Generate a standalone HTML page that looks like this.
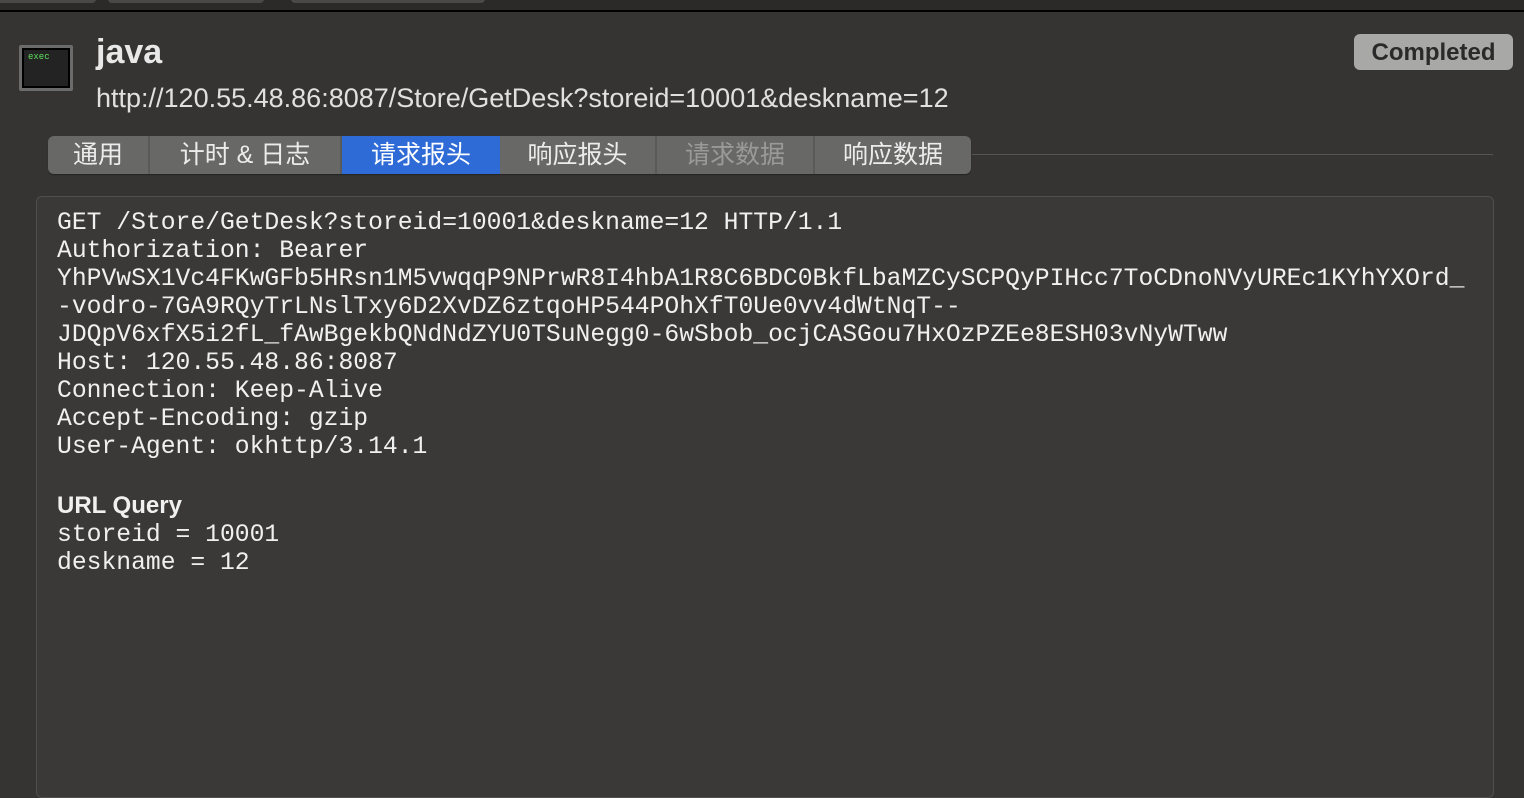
<!DOCTYPE html>
<html><head><meta charset="utf-8"><style>
body{margin:0;width:1524px;height:774px;background:#353433;overflow:hidden;position:relative;font-family:"Liberation Sans","Noto Sans CJK SC",sans-serif;color:#e6e6e6}
.top{position:absolute;left:0;top:0;width:1524px;height:10px;background:#2b2a29;border-bottom:2px solid #000}
.top div{position:absolute;top:-6px;height:9px;background:#4a4948;border-radius:4px}
.icon{position:absolute;left:19px;top:45px;width:54px;height:46px;background:#6b6b6b;border-radius:2px}
.icon div{position:absolute;left:3px;top:3px;width:48px;height:40px;background:#000}
.icon div div{left:2px;top:2px;width:44px;height:36px;background:#232323;font:9px "Liberation Mono",monospace;color:#5ee05e;padding:2px 4px;box-sizing:border-box}
.title{position:absolute;left:96px;top:33px;font-size:34px;font-weight:bold;color:#e8e8e8}
.url{position:absolute;left:96px;top:83px;font-size:27px;color:#e0e0e0}
.badge{position:absolute;left:1354px;top:34px;width:159px;height:36px;background:#a8a8a7;border-radius:6px;color:#2a2a2a;font-weight:bold;font-size:24px;text-align:center;line-height:37px}
.tabs{position:absolute;left:48px;top:136px;height:38px;display:flex;border-radius:6px;overflow:hidden;background:#686867;box-shadow:0 1px 1px rgba(0,0,0,.3)}
.tabs div{height:38px;line-height:38px;font-size:25px;text-align:center;color:#ececec;border-right:2px solid #5a5a59;box-sizing:border-box}
.tabs .a{background:#2e6bd6;color:#fff;border-right:none}
.tabs .d{color:#9a9a99}
.hl{position:absolute;left:972px;top:154px;width:521px;height:1px;background:#555}
.box{position:absolute;left:36px;top:196px;width:1456px;height:600px;background:#3a3938;border:1px solid #4f4e4d;border-radius:6px}
pre{position:absolute;left:57px;top:209px;margin:0;font:24.7px/28px "Liberation Mono",monospace;color:#f0f0f0}
pre b{font-family:"Liberation Sans",sans-serif;font-size:24px}
.q{position:relative;top:3px;display:block}
</style></head><body>
<div class="top"><div style="left:-20px;width:116px"></div><div style="left:108px;width:156px"></div><div style="left:291px;width:194px"></div></div>
<div class="icon"><div><div>exec</div></div></div>
<div class="title">java</div>
<div class="url">http://120.55.48.86:8087/Store/GetDesk?storeid=10001&amp;deskname=12</div>
<div class="badge">Completed</div>
<div class="tabs">
<div style="width:102px">通用</div>
<div style="width:192px">计时 &amp; 日志</div>
<div class="a" style="width:158px">请求报头</div>
<div style="width:157px">响应报头</div>
<div class="d" style="width:158px">请求数据</div>
<div style="width:156px;border-right:none">响应数据</div>
</div>
<div class="hl"></div>
<div class="box"></div>
<pre>GET /Store/GetDesk?storeid=10001&amp;deskname=12 HTTP/1.1
Authorization: Bearer
YhPVwSX1Vc4FKwGFb5HRsn1M5vwqqP9NPrwR8I4hbA1R8C6BDC0BkfLbaMZCySCPQyPIHcc7ToCDnoNVyUREc1KYhYXOrd_
-vodro-7GA9RQyTrLNslTxy6D2XvDZ6ztqoHP544POhXfT0Ue0vv4dWtNqT--
JDQpV6xfX5i2fL_fAwBgekbQNdNdZYU0TSuNegg0-6wSbob_ocjCASGou7HxOzPZEe8ESH03vNyWTww
Host: 120.55.48.86:8087
Connection: Keep-Alive
Accept-Encoding: gzip
User-Agent: okhttp/3.14.1

<span class="q"><b>URL Query</b>
storeid = 10001
deskname = 12</span></pre>
</body></html>
